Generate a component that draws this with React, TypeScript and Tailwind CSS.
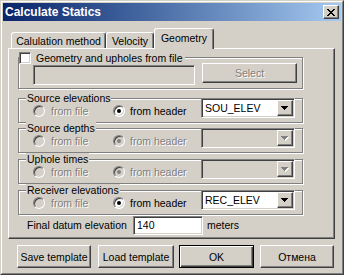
import React from 'react';

const raised =
  'border border-t-white border-l-white border-r-[#404040] border-b-[#404040] shadow-[inset_-1px_-1px_0_#808080]';
const sunken =
  'border border-t-[#808080] border-l-[#808080] border-r-white border-b-white shadow-[inset_1px_1px_0_#404040,inset_-1px_-1px_0_#d4d0c8]';
const etched = 'border border-[#808080] shadow-[inset_1px_1px_0_#fff,1px_1px_0_#fff]';
const grayText = 'text-[#808080] [text-shadow:1px_1px_0_#fff]';

const Arrow = ({ disabled }: { disabled?: boolean }) => (
  <svg width="8" height="5" viewBox="0 0 8 5" shapeRendering="crispEdges">
    {disabled && (
      <path d="M1 1h7v1H1zM2 2h5v1H2zM3 3h3v1H3zM4 4h1v1H4z" fill="#fff" />
    )}
    <path
      d="M0 0h7v1H0zM1 1h5v1H1zM2 2h3v1H2zM3 3h1v1H3z"
      fill={disabled ? '#808080' : '#000'}
    />
  </svg>
);

const Radio = ({ checked, disabled }: { checked?: boolean; disabled?: boolean }) => (
  <span
    className={`flex h-[12px] w-[12px] shrink-0 items-center justify-center rounded-full border border-t-[#808080] border-l-[#808080] border-r-white border-b-white shadow-[inset_1px_1px_0_#404040,inset_-1px_-1px_0_#d4d0c8] ${
      disabled ? 'bg-[#d4d0c8]' : 'bg-white'
    }`}
  >
    {checked && (
      <span className={`h-[4px] w-[4px] rounded-full ${disabled ? 'bg-[#808080]' : 'bg-black'}`} />
    )}
  </span>
);

const Combo = ({ value, disabled }: { value?: string; disabled?: boolean }) => (
  <div
    className={`-mt-px flex h-[20px] w-[94px] self-start p-px ${sunken} ${
      disabled ? 'bg-[#d4d0c8]' : 'bg-white'
    }`}
  >
    <span className="flex flex-1 items-center pl-[2px] text-[10.5px]">{value}</span>
    <span className={`flex h-[16px] w-[16px] items-center justify-center bg-[#d4d0c8] ${raised}`}>
      <Arrow disabled={disabled} />
    </span>
  </div>
);

const Group = ({
  label,
  enabled,
  value,
  className,
}: {
  label: string;
  enabled: boolean;
  value?: string;
  className: string;
}) => (
  <div className={`relative flex h-[25px] w-[285px] items-center pl-[14px] ${etched} ${className}`}>
    <span className="absolute left-[7px] top-[-7px] bg-[#d4d0c8] px-px leading-[12px]">{label}</span>
    <div className="flex w-[80px] items-center gap-[6px]">
      <Radio disabled />
      <span className={grayText}>from file</span>
    </div>
    <div className="flex w-[88px] items-center gap-[5px]">
      <Radio checked disabled={!enabled} />
      <span className={enabled ? '' : grayText}>from header</span>
    </div>
    <Combo value={value} disabled={!enabled} />
  </div>
);

const Tab = ({ label, active, className }: { label: string; active?: boolean; className: string }) => (
  <div
    className={`flex items-center justify-center rounded-t-[3px] border-t border-l border-r border-t-white border-l-white border-r-[#404040] bg-[#d4d0c8] shadow-[inset_-1px_0_0_#808080] ${
      active ? 'relative z-10 -mb-px h-[21px] pb-[2px]' : 'h-[16px]'
    } ${className}`}
  >
    {label}
  </div>
);

const Button = ({ label, className, primary }: { label: string; className: string; primary?: boolean }) => (
  <button
    className={`flex h-[23px] items-center justify-center bg-[#d4d0c8] ${
      primary
        ? 'border border-black shadow-[inset_1px_1px_0_#fff,inset_-1px_-1px_0_#404040,inset_-2px_-2px_0_#808080]'
        : raised
    } ${className}`}
  >
    {label}
  </button>
);

export default function App() {
  return (
    <div className="h-[275px] w-[344px] border border-t-[#d4d0c8] border-l-[#d4d0c8] border-r-[#404040] border-b-[#404040] bg-[#d4d0c8] font-['Liberation_Sans',Arial,sans-serif] text-[10.5px] leading-[12px] text-black">
      <div className="flex h-full flex-col border border-t-white border-l-white border-r-[#808080] border-b-[#808080] p-px">
        {/* title bar */}
        <div className="flex h-[18px] items-center bg-linear-to-r from-[#0a246a] to-[#a6caf0] pl-[2px]">
          <span className="text-[12px] font-bold text-white">Calculate Statics</span>
          <button className={`ml-auto mr-[2px] flex h-[14px] w-[16px] items-center justify-center bg-[#d4d0c8] ${raised}`}>
            <svg width="8" height="7" viewBox="0 0 8 7" shapeRendering="crispEdges">
              <path
                d="M0 0h2v1H0zM6 0h2v1H6zM1 1h2v1H1zM5 1h2v1H5zM2 2h4v1H2zM3 3h2v1H3zM2 4h4v1H2zM1 5h2v1H1zM5 5h2v1H5zM0 6h2v1H0zM6 6h2v1H6z"
                fill="#000"
              />
            </svg>
          </button>
        </div>

        {/* tabs */}
        <div className="mt-[7px] flex h-[20px] items-end pl-[8px]">
          <Tab label="Calulation method" className="w-[95px]" />
          <Tab label="Velocity" className="w-[48px]" />
          <Tab label="Geometry" active className="w-[60px]" />
        </div>

        {/* tab page */}
        <div className="ml-[5px] flex h-[191px] w-[327px] flex-col border border-t-white border-l-white border-r-[#404040] border-b-[#404040] pl-[9px] shadow-[inset_-1px_-1px_0_#808080]">
          <div className={`relative mt-[8px] flex h-[32px] w-[285px] items-start pl-[14px] pt-[5px] ${etched}`}>
            <span className="absolute left-0 top-[-6px] flex items-center gap-[5px] bg-[#d4d0c8] pr-[2px]">
              <span className={`h-[12px] w-[12px] bg-white ${sunken}`} />
              <span>Geometry and upholes from file</span>
            </span>
            <div className={`mt-[2px] h-[20px] w-[162px] bg-[#d4d0c8] ${sunken}`} />
            <div className={`ml-[7px] flex h-[20px] w-[95px] items-center justify-center ${raised} ${grayText}`}>
              Select
            </div>
          </div>

          <Group label="Source elevations" enabled value="SOU_ELEV" className="mt-[9px]" />
          <Group label="Source depths" enabled={false} className="mt-[5px]" />
          <Group label="Uphole times" enabled={false} className="mt-[6px]" />
          <Group label="Receiver elevations" enabled value="REC_ELEV" className="mt-[6px]" />

          <div className="flex h-[20px] items-center pl-[9px]">
            <span className="w-[106px]">Final datum elevation</span>
            <div className={`flex h-[19px] w-[70px] items-center bg-white pl-[3px] ${sunken}`}>140</div>
            <span className="ml-[4px]">meters</span>
          </div>
        </div>

        {/* buttons */}
        <div className="mt-[6px] flex pl-[14px]">
          <Button label="Save template" className="w-[74px]" />
          <Button label="Load template" className="ml-[7px] w-[76px]" />
          <Button label="OK" primary className="ml-[5px] w-[75px]" />
          <Button label="Отмена" className="ml-[6px] w-[74px]" />
        </div>
      </div>
    </div>
  );
}
